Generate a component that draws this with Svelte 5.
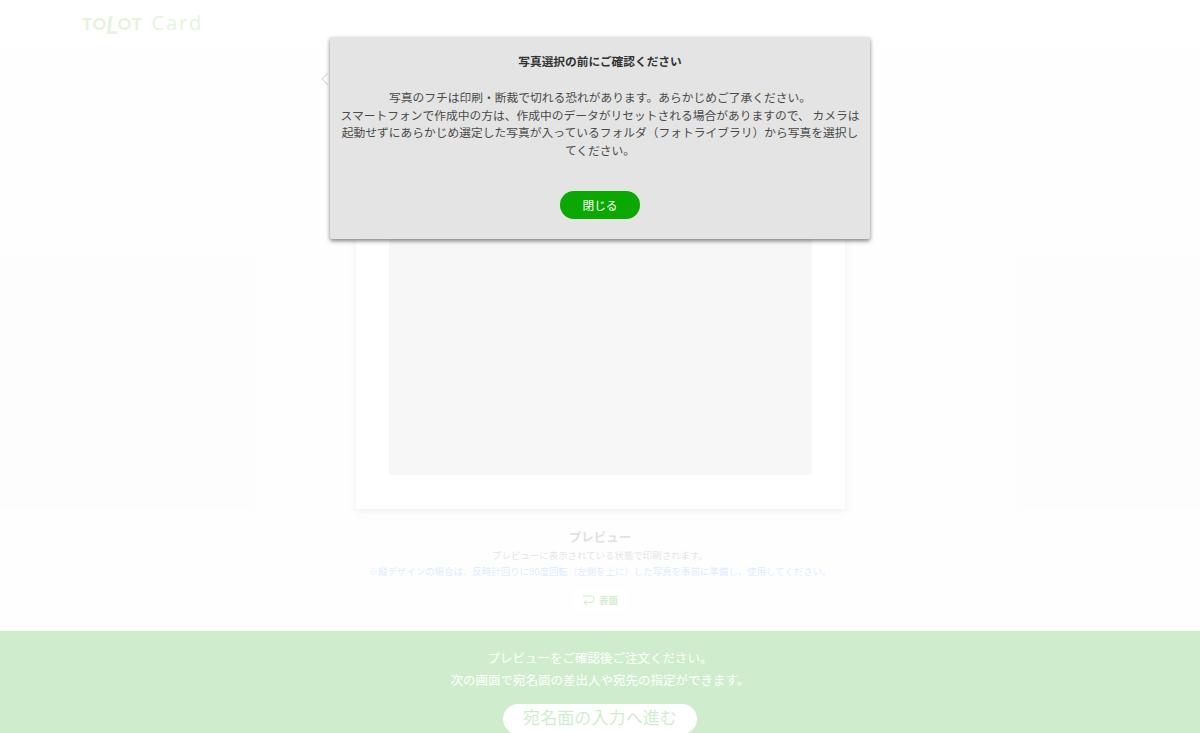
<script>
  let showNotice = $state(true);
</script>

<div class="page">
  <header class="header">
    <a class="logo" href="#top"><span class="tolot">TO<span class="slant">L</span>OT</span><span class="card-word">Card</span></a>
  </header>

  <main class="main">
    <div class="card">
      <svg class="prev" width="10" height="14" viewBox="0 0 10 14" aria-hidden="true">
        <path d="M8 1 L2 7 L8 13" fill="none" stroke="#666" stroke-width="1.4" />
      </svg>
      <div class="photo"></div>
    </div>
    <h2 class="caption-title">プレビュー</h2>
    <p class="caption">プレビューに表示されている状態で印刷されます。</p>
    <p class="caption note">※縦デザインの場合は、反時計回りに90度回転（左側を上に）した写真を事前に準備し、使用してください。</p>
    <button class="flip">
      <svg width="13" height="13" viewBox="0 0 13 13" aria-hidden="true">
        <path d="M1 2 H10 Q12 2 12 5 Q12 8.5 10 8.5 H2 M5 5.5 L2 8.5 L5 11.5" fill="none" stroke="#0aa500" stroke-width="1" />
      </svg>
      表面
    </button>
  </main>

  <footer class="footer">
    <p>プレビューをご確認後ご注文ください。</p>
    <p>次の画面で宛名面の差出人や宛先の指定ができます。</p>
    <button class="next">宛名面の入力へ進む</button>
  </footer>

  {#if showNotice}
    <div class="overlay">
      <div class="modal">
        <h3>写真選択の前にご確認ください</h3>
        <p>写真のフチは印刷・断裁で切れる恐れがあります。あらかじめご了承ください。<br />スマートフォンで作成中の方は、作成中のデータがリセットされる場合がありますので、 カメラは起動せずにあらかじめ選定した写真が入っているフォルダ（フォトライブラリ）から写真を選択してください。</p>
        <button class="close" onclick={() => (showNotice = false)}>閉じる</button>
      </div>
    </div>
  {/if}
</div>

<style>
  :global(body) {
    margin: 0;
    font-family: "Noto Sans CJK JP", "Noto Sans", sans-serif;
  }

  .page {
    position: relative;
    display: flex;
    flex-direction: column;
    height: 100vh;
    overflow: hidden;
    background: #f7f7f7;
  }

  .header {
    flex: none;
    box-sizing: border-box;
    height: 48px;
    padding: 0 0 2px 82px;
    display: flex;
    align-items: center;
    background: #fff;
  }

  .logo {
    display: flex;
    align-items: baseline;
    gap: 9px;
    color: #78c850;
    text-decoration: none;
    font-family: Lato, sans-serif;
    line-height: 1;
  }

  .tolot {
    font-size: 17px;
    font-weight: 900;
    letter-spacing: 0.6px;
  }

  .slant {
    display: inline-block;
    font-size: 25px;
    font-weight: 700;
    line-height: 0;
    margin: 0 -2px 0 -1px;
    transform: translateY(4px) skewX(-8deg);
  }

  .card-word {
    font-family: "Open Sans", sans-serif;
    font-size: 20px;
    font-weight: 500;
    letter-spacing: 1.9px;
  }

  .main {
    flex: 1;
    min-height: 0;
    display: flex;
    flex-direction: column;
    align-items: center;
    padding-top: 16px;
  }

  .card {
    position: relative;
    box-sizing: border-box;
    width: 489px;
    height: 445px;
    padding: 33px 33px 34px;
    background: #fff;
    box-shadow: 0 2px 6px rgba(0, 0, 0, 0.3);
  }

  .prev {
    position: absolute;
    left: -36px;
    top: 8px;
  }

  .photo {
    height: 100%;
    background: #d7d7d7;
  }

  .caption-title {
    margin: 19px 0 0;
    font-size: 12.5px;
    line-height: 18px;
    font-weight: 700;
    color: #666;
  }

  .caption {
    margin: 2px 0 0;
    font-size: 9.45px;
    line-height: 14px;
    color: #777;
  }

  .note {
    color: #4a9bff;
  }

  .flip {
    display: flex;
    align-items: center;
    gap: 4px;
    height: 22px;
    margin-top: 11px;
    padding: 0 11px;
    border: none;
    border-radius: 11px;
    background: #fff;
    color: #0aa500;
    font: 700 9.4px "Noto Sans CJK JP", sans-serif;
  }

  .footer {
    flex: none;
    height: 102px;
    padding-top: 16px;
    box-sizing: border-box;
    text-align: center;
    background: #0fa500;
    color: #fff;
  }

  .footer p {
    margin: 0;
    font-size: 12.5px;
    line-height: 22px;
  }

  .next {
    display: block;
    width: 194px;
    height: 30px;
    margin: 13px auto 0;
    padding: 0 0 5px;
    border: none;
    border-radius: 15px;
    background: #fff;
    color: #0fa500;
    font: 17.1px "Noto Sans CJK JP", sans-serif;
  }

  .overlay {
    position: absolute;
    inset: 0;
    display: flex;
    justify-content: center;
    align-items: flex-start;
    padding-top: 37px;
    box-sizing: border-box;
    background: rgba(255, 255, 255, 0.8);
  }

  .modal {
    box-sizing: border-box;
    width: 540px;
    height: 202px;
    padding: 15px 10px 0;
    text-align: center;
    background: #e4e4e4;
    border-radius: 2px;
    box-shadow: 0 2px 4px rgba(0, 0, 0, 0.5);
    color: #333;
  }

  .modal h3 {
    margin: 0;
    font-size: 11.7px;
    line-height: 18px;
    font-weight: 700;
  }

  .modal p {
    margin: 18px 0 0;
    font-size: 11.75px;
    line-height: 17.5px;
    color: #4a4a4a;
  }

  .close {
    display: block;
    width: 80px;
    height: 28px;
    margin: 33px auto 0;
    padding: 0 0 2px;
    border: none;
    border-radius: 14px;
    background: #0aa800;
    color: #fff;
    font: 11.7px "Noto Sans CJK JP", sans-serif;
    cursor: pointer;
  }
</style>
